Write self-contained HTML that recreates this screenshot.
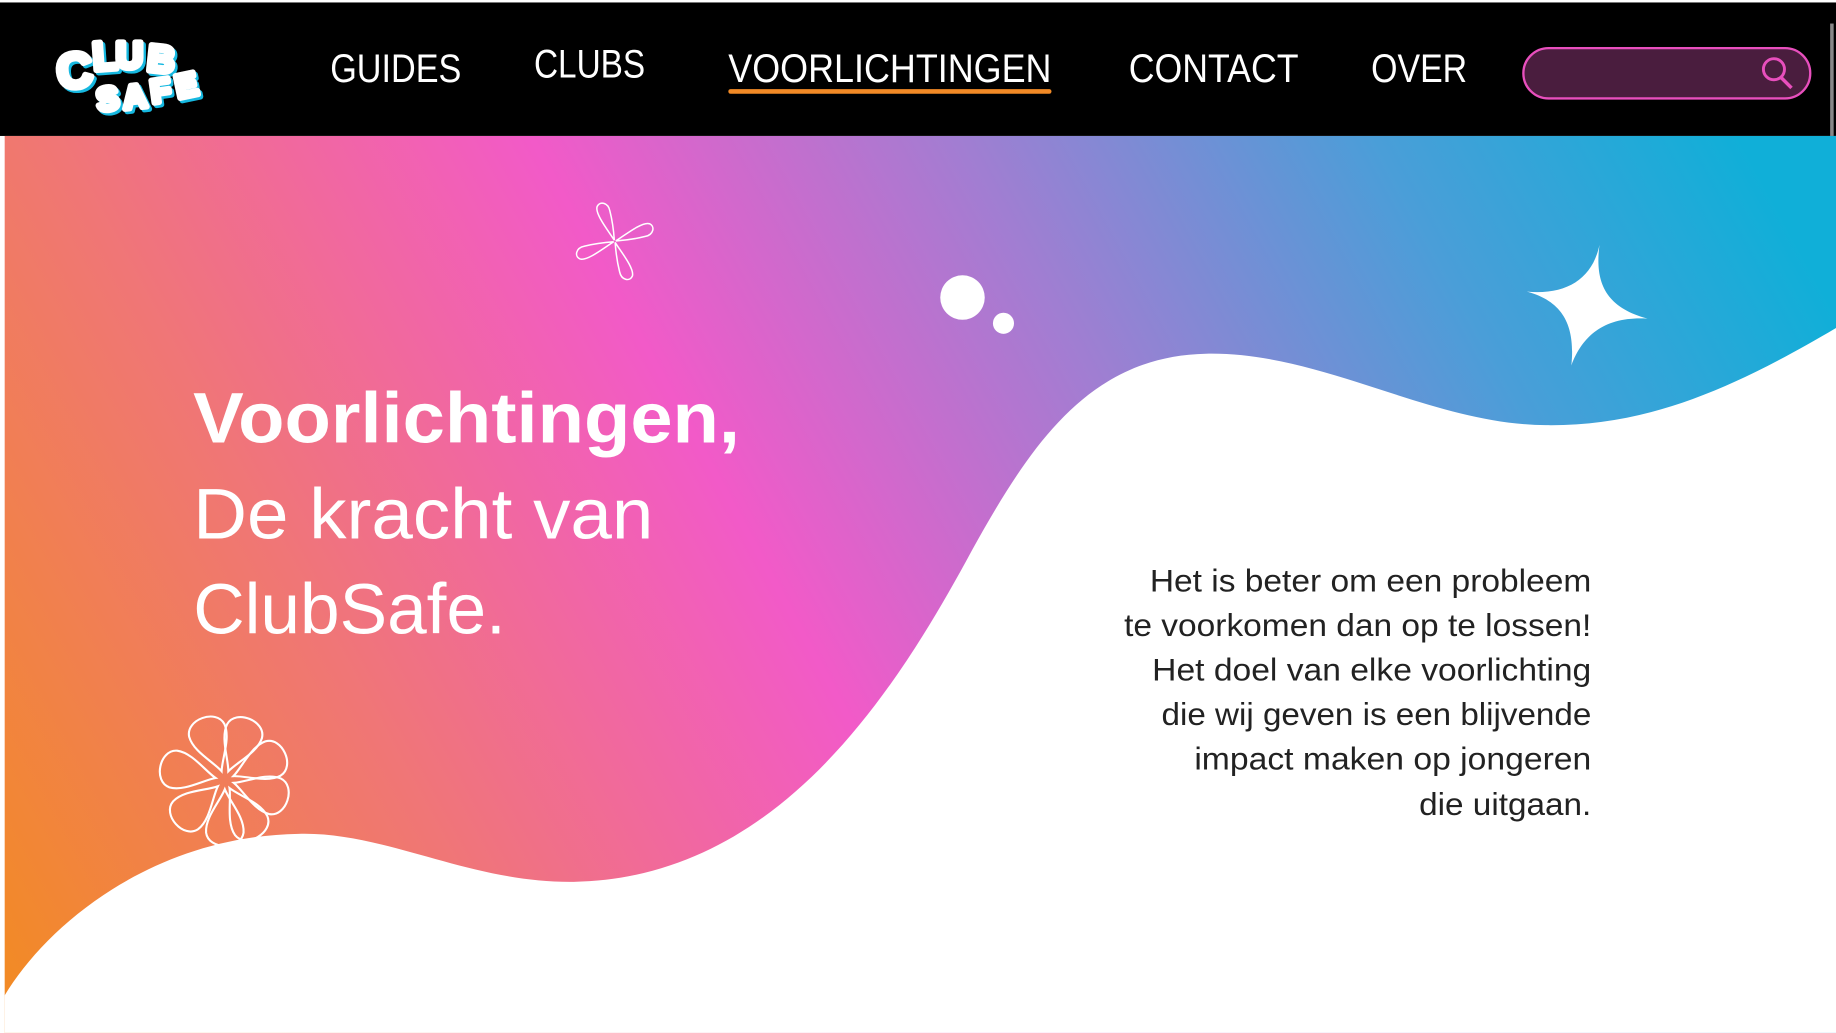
<!DOCTYPE html>
<html><head><meta charset="utf-8"><style>
html,body{margin:0;padding:0;background:#fff;overflow:hidden}
svg{display:block}
text{font-family:"Liberation Sans",sans-serif}
</style></head><body>
<svg width="1836" height="1033" viewBox="0 0 1568 882" xmlns="http://www.w3.org/2000/svg">
<defs>
<linearGradient id="g" gradientUnits="userSpaceOnUse" x1="0" y1="820" x2="1500" y2="0">
<stop offset="0" stop-color="#f28a26"/>
<stop offset="0.22" stop-color="#f07676"/>
<stop offset="0.43" stop-color="#f25ac8"/>
<stop offset="0.62" stop-color="#a07ed2"/>
<stop offset="0.8" stop-color="#4a9ed8"/>
<stop offset="0.96" stop-color="#10afd8"/>
</linearGradient>
<path id="pet" d="M0,-8 C-4,-18 -17,-32 -16,-45 C-14,-60 14,-60 16,-45 C17,-32 4,-18 0,-8 Z" fill="none" stroke="#fff" stroke-width="1.8"/>
<path id="sp" d="M0,-1 C-2,-10 -8,-28 -4,-33 C0,-37 6,-33 5,-26 C4,-16 2,-8 0,-1 Z" fill="none" stroke="#fff" stroke-width="1.3"/>
</defs>
<rect x="0" y="0" width="1568" height="882" fill="#fff"/>
<rect x="0" y="2" width="1568" height="114" fill="#000"/>
<rect x="4" y="116" width="1564" height="766" fill="url(#g)"/>
<g font-weight="bold" stroke-linejoin="round">
<g fill="#16b8e0" stroke="#16b8e0" stroke-width="5" transform="translate(2,2)">
<text x="50" y="76" font-size="42" transform="rotate(-6 50 76)">C</text>
<text x="80" y="60" font-size="34" transform="rotate(-4 80 60)">L</text>
<text x="99" y="58" font-size="32">U</text>
<text x="125" y="60" font-size="32" transform="rotate(6 125 60)">B</text>
<text x="84" y="95" font-size="28" transform="rotate(-8 84 95)">S</text>
<text x="106" y="93" font-size="28" transform="rotate(-6 106 93)">A</text>
<text x="130" y="88" font-size="28" transform="rotate(-8 130 88)">F</text>
<text x="152" y="84" font-size="28" transform="rotate(-12 152 84)">E</text>
</g>
<g fill="#fff" stroke="#fff" stroke-width="5">
<text x="50" y="76" font-size="42" transform="rotate(-6 50 76)">C</text>
<text x="80" y="60" font-size="34" transform="rotate(-4 80 60)">L</text>
<text x="99" y="58" font-size="32">U</text>
<text x="125" y="60" font-size="32" transform="rotate(6 125 60)">B</text>
<text x="84" y="95" font-size="28" transform="rotate(-8 84 95)">S</text>
<text x="106" y="93" font-size="28" transform="rotate(-6 106 93)">A</text>
<text x="130" y="88" font-size="28" transform="rotate(-8 130 88)">F</text>
<text x="152" y="84" font-size="28" transform="rotate(-12 152 84)">E</text>
</g>
</g>
<g fill="#fff" font-size="34">
<text x="282" y="70" textLength="112" lengthAdjust="spacingAndGlyphs">GUIDES</text>
<text x="456" y="66" textLength="95" lengthAdjust="spacingAndGlyphs">CLUBS</text>
<text x="622" y="70" textLength="276" lengthAdjust="spacingAndGlyphs">VOORLICHTINGEN</text>
<text x="964" y="70" textLength="145" lengthAdjust="spacingAndGlyphs">CONTACT</text>
<text x="1171" y="70" textLength="82" lengthAdjust="spacingAndGlyphs">OVER</text>
</g>
<rect x="622" y="76" width="276" height="4" rx="2" fill="#f28a26"/>
<rect x="1301" y="41" width="245" height="43" rx="21.5" fill="#4a1d3e" stroke="#e84fbd" stroke-width="2"/>
<circle cx="1515" cy="59" r="9" fill="none" stroke="#e84fbd" stroke-width="2.5"/>
<line x1="1521" y1="66" x2="1530" y2="75" stroke="#e84fbd" stroke-width="3"/>
<rect x="1563" y="20" width="3" height="96" fill="#888"/>
<g transform="translate(192,666)">
<use href="#pet" transform="rotate(-20)"/><use href="#pet" transform="rotate(22)"/><use href="#pet" transform="rotate(66)"/><use href="#pet" transform="rotate(108)"/><use href="#pet" transform="rotate(150)"/><use href="#pet" transform="rotate(180)"/><use href="#pet" transform="rotate(228)"/><use href="#pet" transform="rotate(282)"/>
</g>
<path d="M1568,280 C1470,338 1400,364 1320,363 C1220,362 1130,300 1030,302 C930,304 880,380 830,470 C760,600 660,750 490,753 C400,754 330,710 255,712 C130,714 40,790 4,850 L4,882 L1568,882 Z" fill="#fff"/>
<g transform="translate(525,206)">
<use href="#sp" transform="rotate(-20)"/><use href="#sp" transform="rotate(70)"/><use href="#sp" transform="rotate(160)"/><use href="#sp" transform="rotate(250)"/>
</g>
<circle cx="822" cy="254" r="19" fill="#fff"/>
<circle cx="857" cy="276" r="9" fill="#fff"/>
<path d="M1366,209 C1362,240 1370,262 1407,272 C1372,270 1352,285 1342,312 C1345,282 1338,258 1304,249 C1338,252 1360,238 1366,209 Z" fill="#fff"/>
<g fill="#fff" font-size="61">
<text x="165" y="378" font-weight="bold" textLength="467" lengthAdjust="spacingAndGlyphs">Voorlichtingen,</text>
<text x="165" y="460" textLength="393" lengthAdjust="spacingAndGlyphs">De kracht van</text>
<text x="165" y="541" textLength="267" lengthAdjust="spacingAndGlyphs">ClubSafe.</text>
</g>
<g fill="#222" font-size="26.5">
<text x="982" y="505" textLength="377" lengthAdjust="spacingAndGlyphs">Het is beter om een probleem</text>
<text x="960" y="543" textLength="399" lengthAdjust="spacingAndGlyphs">te voorkomen dan op te lossen!</text>
<text x="984" y="581" textLength="375" lengthAdjust="spacingAndGlyphs">Het doel van elke voorlichting</text>
<text x="992" y="619" textLength="367" lengthAdjust="spacingAndGlyphs">die wij geven is een blijvende</text>
<text x="1020" y="657" textLength="339" lengthAdjust="spacingAndGlyphs">impact maken op jongeren</text>
<text x="1212" y="696" textLength="147" lengthAdjust="spacingAndGlyphs">die uitgaan.</text>
</g>
</svg>
</body></html>
